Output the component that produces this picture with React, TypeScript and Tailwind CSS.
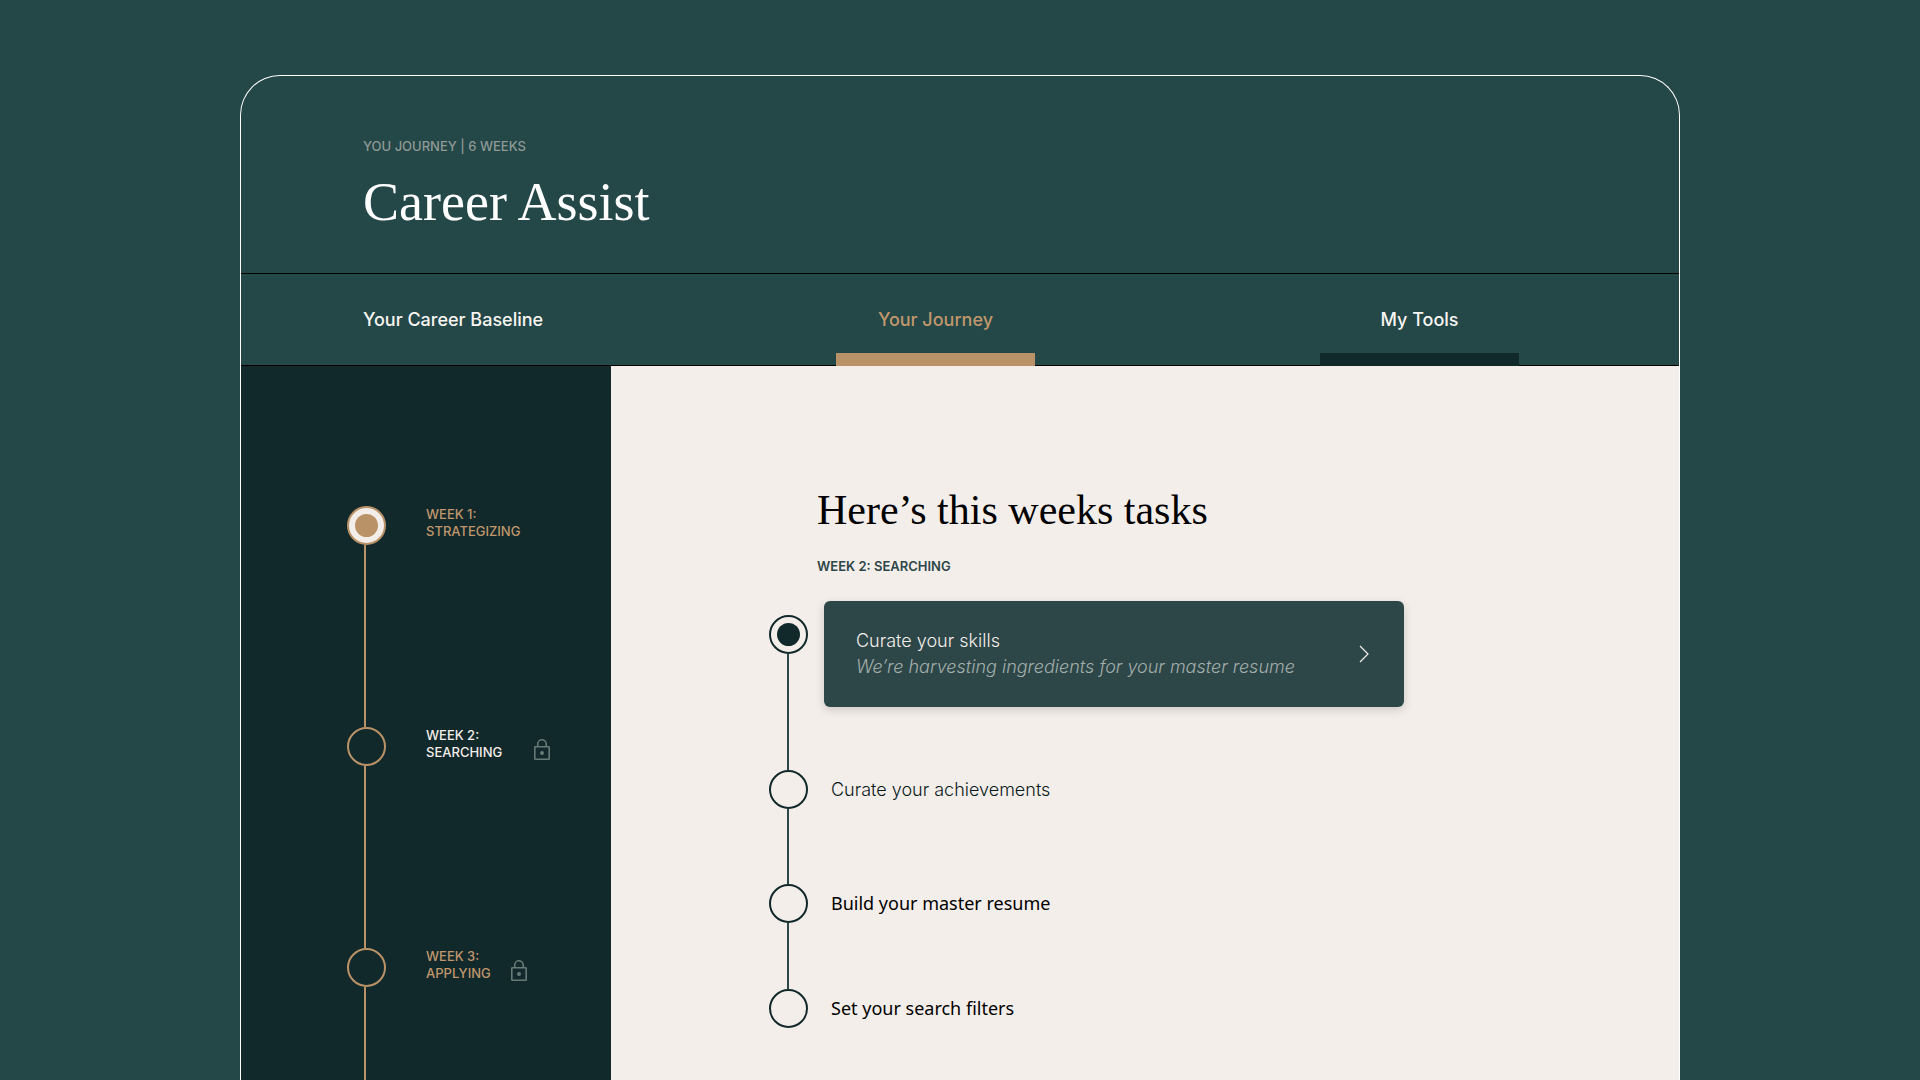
import React from "react";
import clsx from "clsx";

const tabs = [
  { name: "Your Career Baseline", style: "w-[188px] text-left text-[#f8f5f2]", bar: "" },
  { name: "Your Journey", style: "w-[199px] text-[#c0976c]", bar: "bg-[#ba9268]" },
  { name: "My Tools", style: "w-[199px] text-[#f8f5f2]", bar: "bg-[#12292b]" },
];

const weeks = [
  { week: "Week 1:", title: "Strategizing", done: true, color: "text-[#c0976c]", lock: "" },
  { week: "Week 2:", title: "Searching", done: false, color: "text-[#f4eeea]", lock: "ml-8" },
  { week: "Week 3:", title: "Applying", done: false, color: "text-[#c0976c]", lock: "ml-5" },
];

const tasks = [
  { title: "Curate your achievements", font: "font-['Inter'] font-light text-[#0a1a1b]", line: "h-[75px]" },
  { title: "Build your master resume", font: "font-['Noto_Sans'] text-black", line: "h-[66px]" },
  { title: "Set your search filters", font: "font-['Noto_Sans'] text-black", line: "" },
];

const LockIcon = () => (
  <svg width="16" height="21" viewBox="0 0 16 21" fill="none" stroke="#667a76" strokeWidth="1.6">
    <rect x="0.8" y="7.8" width="14.4" height="12.4" rx="0.5" />
    <path d="M3.75 7.5V5a4.25 4.25 0 0 1 8.5 0v2.5" />
    <circle cx="8" cy="14" r="2" fill="#667a76" stroke="none" />
  </svg>
);

const Header = () => (
  <header className="border-b border-black px-[122px] pt-[62px] pb-[41px]">
    <p className="text-[13px] leading-4 font-medium uppercase text-[#8f9a96]">
      You journey | 6 weeks
    </p>
    <h1 className="mt-[18px] font-['Liberation_Serif',serif] text-[54px] leading-[60px] text-white">
      Career Assist
    </h1>
  </header>
);

const Tabs = () => (
  <nav className="flex h-[92px] justify-between border-b border-black pl-[122px] pr-40">
    {tabs.map((tab) => (
      <button key={tab.name} className={clsx("relative text-[18px] font-medium", tab.style)}>
        {tab.name}
        {tab.bar && <span className={clsx("absolute inset-x-0 -bottom-px h-[13px]", tab.bar)} />}
      </button>
    ))}
  </nav>
);

const Sidebar = () => (
  <aside className="flex w-[370px] shrink-0 flex-col bg-[#12292b] pt-[140px] pl-[106px]">
    <ol className="flex flex-1 flex-col">
      {weeks.map((item) => (
        <li key={item.week} className="flex h-[221px] last:h-auto last:flex-1">
          <div className="flex w-[39px] flex-col">
            <div
              className={clsx(
                "flex h-[39px] shrink-0 items-center justify-center rounded-full border-2 border-[#ba9268]",
                item.done && "bg-[#f4eeea]"
              )}
            >
              {item.done && <span className="size-[23px] rounded-full bg-[#ba9268]" />}
            </div>
            <div className="ml-[17px] w-0.5 flex-1 bg-[#ba9268]" />
          </div>
          <a
            href="#"
            className={clsx("ml-10 h-[34px] text-[13px] leading-[17px] font-medium uppercase", item.color)}
          >
            {item.week}
            <br />
            {item.title}
          </a>
          {item.lock && (
            <div className={clsx("pt-3", item.lock)}>
              <LockIcon />
            </div>
          )}
        </li>
      ))}
    </ol>
  </aside>
);

const TaskList = () => (
  <ol className="mt-[27px]">
    <li className="flex">
      <div className="w-[39px] shrink-0 pt-[14px]">
        <div className="flex h-[39px] items-center justify-center rounded-full border-2 border-[#12292b]">
          <span className="size-[23px] rounded-full bg-[#12292b]" />
        </div>
        <div className="ml-[18px] h-[116px] w-0.5 bg-[#2c4747]" />
      </div>
      <button className="ml-4 flex h-[106px] w-full max-w-[580px] items-center justify-between rounded-md bg-[#2d4648] pl-8 pr-[35px] text-left text-[18px] leading-[26px] font-light shadow-[0_3px_10px_rgba(0,0,0,0.16)]">
        <span>
          <span className="block text-[#f4eeea]">Curate your skills</span>
          <span className="block text-[#a3aeaa] italic">
            We’re harvesting ingredients for your master resume
          </span>
        </span>
        <svg width="10" height="18" viewBox="0 0 10 18" fill="none" stroke="#f4eeea" strokeWidth="1.2">
          <path d="M1 1l8 8-8 8" />
        </svg>
      </button>
    </li>
    {tasks.map((task) => (
      <li key={task.title} className="flex">
        <div className="w-[39px] shrink-0">
          <div className="h-[39px] rounded-full border-2 border-[#12292b]" />
          <div className={clsx("ml-[18px] w-0.5 bg-[#2c4747]", task.line)} />
        </div>
        <a href="#" className={clsx("ml-[23px] flex h-[39px] items-center text-[18px]", task.font)}>
          {task.title}
        </a>
      </li>
    ))}
  </ol>
);

export default function App() {
  return (
    <div className="flex min-h-screen flex-col bg-[#244747] pt-[75px] font-['Inter',sans-serif]">
      <div className="mx-auto flex w-3/4 flex-1 flex-col rounded-t-[40px] border border-b-0 border-white">
        <Header />
        <Tabs />
        <div className="flex flex-1">
          <Sidebar />
          <main className="flex-1 bg-[#f4eeea] pt-[120px] pr-10 pb-12 pl-[158px]">
            <div className="pl-12">
              <h2 className="font-['Liberation_Serif',serif] text-[42px] leading-[48px] text-black">
                Here’s this weeks tasks
              </h2>
              <p className="mt-6 text-[13px] leading-4 font-semibold uppercase text-[#2d4648]">
                Week 2: Searching
              </p>
            </div>
            <TaskList />
          </main>
        </div>
      </div>
    </div>
  );
}
